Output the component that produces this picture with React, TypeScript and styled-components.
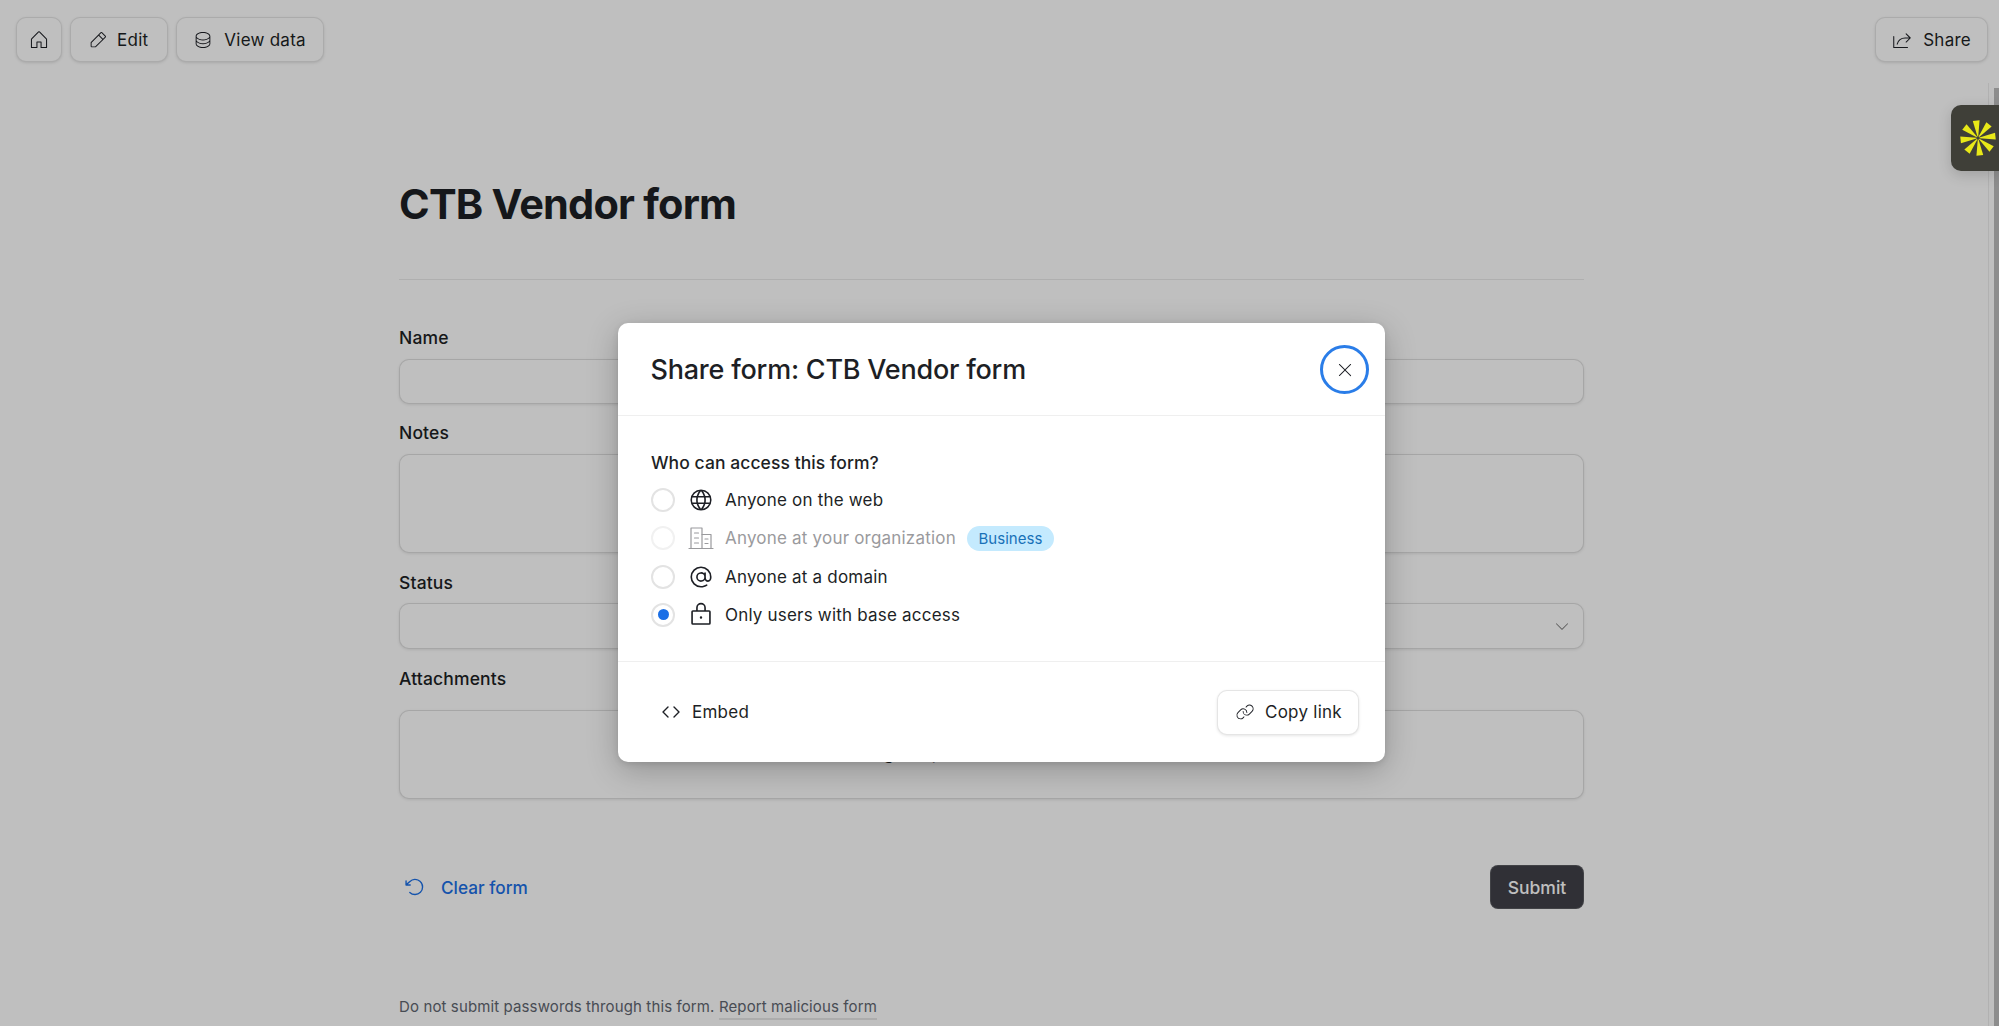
import React from "react";
import styled, { createGlobalStyle } from "styled-components";
import {
  PiHouseLight,
  PiPencilSimpleLight,
  PiDatabaseLight,
  PiShareLight,
  PiGlobe,
  PiAt,
  PiLock,
  PiLinkLight,
  PiArrowCounterClockwise,
  PiCaretDownLight,
  PiXLight,
} from "react-icons/pi";

const Global = createGlobalStyle`
  html, body { margin: 0; height: 100%; overflow: hidden; background: #fff; }
  #root { height: 100%; }
  * { box-sizing: border-box; }
  body { font-family: Inter, "Liberation Sans", sans-serif; color: #1d1f25; }
`;

const Page = styled.div`
  position: relative;
  height: 1026px;
  background: #fff;
  overflow: hidden;
`;

const TopBar = styled.header`
  display: flex;
  justify-content: space-between;
  padding: 17px 11px 0 16px;
`;

const ButtonGroup = styled.div`
  display: flex;
  gap: 8px;
`;

const TopButton = styled.button`
  display: inline-flex;
  align-items: center;
  gap: ${(p) => p.$gap ?? 12}px;
  height: 45px;
  padding: 0 ${(p) => p.$right ?? 17}px 0 ${(p) => p.$left ?? 17}px;
  font: 400 17px Inter, sans-serif;
  letter-spacing: 0.25px;
  color: #1d1f25;
  background: #fff;
  border: 1px solid rgba(0, 0, 0, 0.1);
  border-radius: 10px;
  box-shadow: 0 1px 3px rgba(0, 0, 0, 0.12);
`;

const Form = styled.main`
  width: 1185px;
  margin: 117px 0 0 399px;
`;

const Title = styled.h1`
  margin: 0;
  font-size: 41.5px;
  line-height: 50px;
  font-weight: 700;
  letter-spacing: -0.8px;
`;

const Rule = styled.hr`
  margin: 50px 0 47px;
  border: 0;
  border-top: 1px solid #eaeaea;
`;

const Field = styled.div`
  margin-bottom: ${(p) => p.$after}px;
`;

const Label = styled.div`
  font-size: 17.5px;
  font-weight: 500;
  letter-spacing: 0.15px;
  line-height: 22px;
  height: 22px;
  margin-bottom: ${(p) => p.$gap ?? 10}px;
`;

const InputBox = styled.div`
  display: flex;
  align-items: center;
  justify-content: ${(p) => (p.$center ? "center" : "flex-end")};
  height: ${(p) => p.$h}px;
  padding: 0 12px;
  background: #fff;
  border: 1px solid rgba(0, 0, 0, 0.13);
  border-radius: 10px;
  box-shadow: 0 1px 3px rgba(0, 0, 0, 0.1);
  color: #777;
`;

const DropHint = styled.span`
  margin-bottom: 5px;
  font-size: 18px;
  color: #1d1f25;
`;

const Actions = styled.div`
  display: flex;
  align-items: center;
  justify-content: space-between;
  margin-top: 66px;
`;

const ClearForm = styled.a`
  display: inline-flex;
  align-items: center;
  gap: 15px;
  padding-left: 5px;
  font-size: 17.2px;
  font-weight: 450;
  color: #1b6fe6;
`;

const Submit = styled.button`
  height: 44px;
  width: 94px;
  font: 500 17.5px Inter, sans-serif;
  color: #fff;
  background: #404148;
  border: 1px solid rgba(255, 255, 255, 0.12);
  border-radius: 8px;
`;

const Foot = styled.p`
  margin: 89px 0 0;
  font-size: 15px;
  letter-spacing: 0.12px;
  line-height: 18px;
  color: #616670;
`;

const ReportLink = styled.a`
  padding-bottom: 2px;
  border-bottom: 2px solid #e6e6e6;
`;

const Scrollbar = styled.div`
  position: absolute;
  top: 83px;
  right: 0;
  bottom: 0;
  width: 11px;
  padding: 5px 0 0 5px;
  border-left: 1px solid #ececec;
`;

const ScrollThumb = styled.div`
  height: 100%;
  background: #bdbdbd;
`;

const Overlay = styled.div`
  position: absolute;
  inset: 0;
  display: flex;
  justify-content: flex-start;
  align-items: flex-start;
  padding: 323px 0 0 618px;
  background: rgba(0, 0, 0, 0.25);
`;

const Modal = styled.section`
  width: 767px;
  height: 439px;
  display: flex;
  flex-direction: column;
  background: #fff;
  border-radius: 10px;
  box-shadow: 0 8px 32px rgba(0, 0, 0, 0.24), 0 2px 6px rgba(0, 0, 0, 0.1);
`;

const ModalHeader = styled.div`
  height: 92.5px;
  display: flex;
  align-items: center;
  justify-content: space-between;
  padding: 1.5px 16px 0 32.5px;
  border-bottom: 1px solid #efefef;
`;

const ModalTitle = styled.h2`
  margin: 0;
  font-size: 27px;
  font-weight: 500;
  letter-spacing: -0.22px;
`;

const CloseButton = styled.button`
  width: 49px;
  height: 49px;
  display: flex;
  align-items: center;
  justify-content: center;
  padding: 0;
  color: #1d1f25;
  background: #fff;
  border: 3px solid #2a7de8;
  border-radius: 50%;
`;

const ModalBody = styled.div`
  height: 246.5px;
  padding: 36.5px 33px 0;
  border-bottom: 1px solid #efefef;
`;

const Question = styled.div`
  font-size: 17.5px;
  font-weight: 450;
  letter-spacing: 0.07px;
  line-height: 22px;
  margin-bottom: 7px;
`;

const Option = styled.div`
  display: flex;
  align-items: center;
  height: 38.25px;
  font-size: 17px;
  letter-spacing: 0.2px;
  color: ${(p) => (p.$disabled ? "#9a9a9d" : "#1d1f25")};
`;

const Radio = styled.span`
  width: 24px;
  height: 24px;
  flex: none;
  display: flex;
  align-items: center;
  justify-content: center;
  border-radius: 50%;
  background: #fff;
  border: 2.5px solid ${(p) => (p.$disabled ? "#f1f1f1" : "#e3e3e3")};
`;

const RadioDot = styled.span`
  width: 11px;
  height: 11px;
  border-radius: 50%;
  background: #1b6fe6;
`;

const OptionIcon = styled.span`
  width: 26px;
  height: 26px;
  margin: 0 11px 0 13px;
  display: flex;
  align-items: center;
  justify-content: center;
  flex: none;
`;

const Pill = styled.span`
  margin-left: 11px;
  height: 25px;
  padding: 0 11.5px;
  display: inline-flex;
  align-items: center;
  font-size: 15px;
  letter-spacing: 0.05px;
  color: #1871b8;
  background: #c4eafe;
  border-radius: 13px;
`;

const ModalFooter = styled.div`
  flex: 1;
  display: flex;
  align-items: center;
  justify-content: space-between;
  padding: 0 26px 0 43px;
`;

const Embed = styled.button`
  display: inline-flex;
  align-items: center;
  gap: 11px;
  padding: 0;
  font: 400 17px Inter, sans-serif;
  letter-spacing: 0.25px;
  color: #1d1f25;
  background: none;
  border: 0;
`;

const CopyLink = styled.button`
  display: inline-flex;
  align-items: center;
  gap: 10px;
  height: 45px;
  width: 142px;
  padding: 0 0 0 17px;
  font: 400 17px Inter, sans-serif;
  letter-spacing: 0.25px;
  color: #1d1f25;
  background: #fff;
  border: 1px solid rgba(0, 0, 0, 0.1);
  border-radius: 10px;
  box-shadow: 0 1px 3px rgba(0, 0, 0, 0.1);
`;

const Launcher = styled.div`
  position: absolute;
  top: 105px;
  right: 0;
  width: 48px;
  height: 66px;
  display: flex;
  align-items: center;
  padding-left: 8px;
  background: #3f3f38;
  border-radius: 10px 0 0 10px;
  box-shadow: 0 4px 14px rgba(0, 0, 0, 0.16);
`;

const spokes = [0, 45, 90, 135, 180, 225, 270, 315];

function Spark() {
  return (
    <svg width="38" height="38" viewBox="-19 -19 38 38">
      {spokes.map((a) => (
        <polygon key={a} points="-0.4,-1.5 0.4,-1.5 3.4,-17.5 -3.4,-17.5" fill="#e8e818" transform={`rotate(${a - 6})`} />
      ))}
    </svg>
  );
}

function CodeIcon() {
  return (
    <svg width="20" height="20" viewBox="0 0 20 20" fill="none" stroke="currentColor" strokeWidth="1.4" strokeLinecap="round" strokeLinejoin="round">
      <path d="M7 5 L2 10 L7 15" />
      <path d="M13 5 L18 10 L13 15" />
    </svg>
  );
}

function BuildingsIcon() {
  return (
    <svg width="26" height="26" viewBox="0 0 26 26" fill="none" stroke="currentColor" strokeWidth="1.2" strokeLinecap="round" strokeLinejoin="round">
      <path d="M1 23.5 H25" />
      <path d="M3 23.5 V3 H14 V23.5" />
      <path d="M14 9.5 H23 V23.5" />
      <path d="M6.5 8 H10.5 M6.5 13 H10.5 M6.5 18 H10.5 M17 14 H20 M17 18.5 H20" />
    </svg>
  );
}

export default function App() {
  return (
    <Page>
      <Global />
      <TopBar>
        <ButtonGroup>
          <TopButton $left={11} $right={11}>
            <PiHouseLight size={22} />
          </TopButton>
          <TopButton $gap={9} $left={17} $right={18.5}>
            <PiPencilSimpleLight size={20} />
            Edit
          </TopButton>
          <TopButton $gap={11} $left={16.5} $right={17}>
            <PiDatabaseLight size={20} />
            View data
          </TopButton>
        </ButtonGroup>
        <TopButton $gap={10} $left={15} $right={16}>
          <PiShareLight size={22} />
          Share
        </TopButton>
      </TopBar>
      <Form>
        <Title>CTB Vendor form</Title>
        <Rule />
        <Field $after={18}>
          <Label>Name</Label>
          <InputBox $h={45} />
        </Field>
        <Field $after={19}>
          <Label>Notes</Label>
          <InputBox $h={99} />
        </Field>
        <Field $after={19}>
          <Label $gap={9}>Status</Label>
          <InputBox $h={46}>
            <PiCaretDownLight size={18} />
          </InputBox>
        </Field>
        <Field $after={0}>
          <Label $gap={20}>Attachments</Label>
          <InputBox $h={89} $center>
            <DropHint>Drag to upload files or click here</DropHint>
          </InputBox>
        </Field>
        <Actions>
          <ClearForm>
            <PiArrowCounterClockwise size={22} />
            Clear form
          </ClearForm>
          <Submit>Submit</Submit>
        </Actions>
        <Foot>
          Do not submit passwords through this form. <ReportLink>Report malicious form</ReportLink>
        </Foot>
      </Form>
      <Scrollbar>
        <ScrollThumb />
      </Scrollbar>
      <Overlay>
        <Modal>
          <ModalHeader>
            <ModalTitle>Share form: CTB Vendor form</ModalTitle>
            <CloseButton>
              <PiXLight size={20} />
            </CloseButton>
          </ModalHeader>
          <ModalBody>
            <Question>Who can access this form?</Question>
            <Option>
              <Radio />
              <OptionIcon><PiGlobe size={26} /></OptionIcon>
              Anyone on the web
            </Option>
            <Option $disabled>
              <Radio $disabled />
              <OptionIcon><BuildingsIcon /></OptionIcon>
              Anyone at your organization
              <Pill>Business</Pill>
            </Option>
            <Option>
              <Radio />
              <OptionIcon><PiAt size={26} /></OptionIcon>
              Anyone at a domain
            </Option>
            <Option>
              <Radio><RadioDot /></Radio>
              <OptionIcon><PiLock size={26} /></OptionIcon>
              Only users with base access
            </Option>
          </ModalBody>
          <ModalFooter>
            <Embed>
              <CodeIcon />
              Embed
            </Embed>
            <CopyLink>
              <PiLinkLight size={20} />
              Copy link
            </CopyLink>
          </ModalFooter>
        </Modal>
      </Overlay>
      <Launcher>
        <Spark />
      </Launcher>
    </Page>
  );
}
